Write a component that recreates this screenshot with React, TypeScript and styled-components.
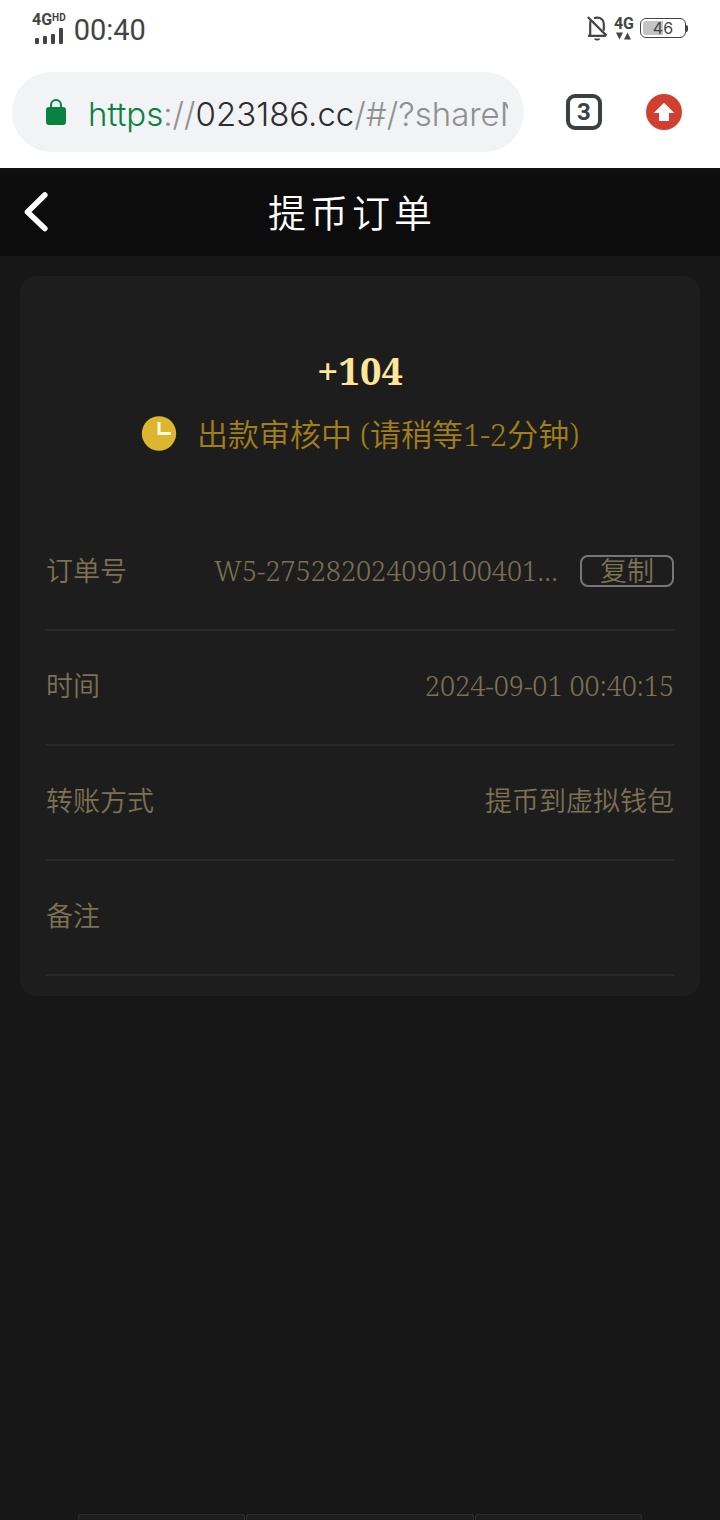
import React from "react";
import styled, { createGlobalStyle } from "styled-components";

const GlobalStyle = createGlobalStyle`
  *, *::before, *::after { box-sizing: border-box; }
  html { background: #171717; }
  body { margin: 0; }
  button { font: inherit; color: inherit; background: none; border: 0; padding: 0; cursor: pointer; }
  svg { display: block; flex: none; }
`;

const uiFont = `Inter, Roboto, "Noto Sans CJK SC", sans-serif`;
const systemFont = `Roboto, "Noto Sans CJK SC", sans-serif`;
const pageFont = `"Noto Serif", "DejaVu Serif Condensed", "Noto Sans CJK SC", serif`;

const Screen = styled.div`
  display: flex;
  flex-direction: column;
  min-height: 100vh;
  background: #171717;
  font-family: ${pageFont};
  font-weight: 350;
`;

const StatusBar = styled.div`
  display: flex;
  align-items: center;
  justify-content: space-between;
  height: 56px;
  padding: 0 32px;
  background: #fff;
  color: #444;
  font-family: ${systemFont};
`;

const StatusGroup = styled.div<{ $gap: number }>`
  display: flex;
  align-items: center;
  gap: ${({ $gap }) => $gap}px;
`;

const Clock = styled.time`
  font-size: 29px;
  font-weight: 400;
  line-height: 32px;
  padding-top: 4px;
`;

const NetworkStack = styled.div`
  display: flex;
  flex-direction: column;
  gap: 1px;
`;

const NetworkLabel = styled.span`
  display: flex;
  align-items: flex-start;
  font-size: 16px;
  font-weight: 700;
  line-height: 14px;
`;

const NetworkMark = styled.span`
  font-size: 10px;
  line-height: 10px;
`;

const BatteryShell = styled.div`
  display: flex;
  align-items: center;
`;

const BatteryBody = styled.div`
  display: flex;
  align-items: center;
  justify-content: center;
  width: 46px;
  height: 20px;
  border: 1px solid #444;
  border-radius: 6px;
  background: linear-gradient(to right, #c4c4c4 50%, #fff 50%) content-box;
  padding: 2px;
  font-family: ${uiFont};
  font-size: 16px;
  font-weight: 400;
  line-height: 16px;
`;

const BatteryTip = styled.div`
  width: 2px;
  height: 7px;
  background: #444;
  border-radius: 0 2px 2px 0;
`;

const BrowserBar = styled.div`
  display: flex;
  align-items: center;
  padding: 16px 38px 16px 12px;
  background: #fff;
  font-family: ${uiFont};
`;

const AddressBox = styled.button`
  display: flex;
  align-items: center;
  flex: 1;
  min-width: 0;
  height: 80px;
  padding: 0 16px 0 32px;
  border-radius: 40px;
  background: #f1f3f4;
  text-align: left;
`;

const AddressText = styled.span`
  flex: 1;
  min-width: 0;
  margin-left: 20px;
  overflow: hidden;
  white-space: nowrap;
  font-size: 33px;
  font-weight: 300;
  line-height: 44px;
  padding-top: 4px;
  color: #8e9092;
`;

const Secure = styled.span`
  color: #0b8043;
`;

const Host = styled.span`
  color: #2b2d30;
`;

const TabCount = styled.button`
  width: 36px;
  height: 36px;
  margin-left: 42px;
  border: 4px solid #3c4043;
  border-radius: 9px;
  color: #3c4043;
  font-family: ${systemFont};
  font-size: 24px;
  font-weight: 700;
  line-height: 28px;
`;

const UpdateButton = styled.button`
  margin-left: 44px;
`;

const Header = styled.header`
  display: grid;
  grid-template-columns: 72px 1fr 72px;
  align-items: center;
  height: 88px;
  background: linear-gradient(#111 0, #0c0c0c 12px);
  color: #fff;
`;

const BackButton = styled.button`
  padding-left: 22px;
`;

const Title = styled.h1`
  margin: 0 16px 0 0;
  text-align: center;
  font-size: 38px;
  font-weight: 350;
  line-height: 48px;
  letter-spacing: 4px;
`;

const Card = styled.main`
  margin: 20px 20px 40px;
  padding: 68px 26px 20px;
  border-radius: 16px;
  background: #1d1d1d;
`;

const Amount = styled.p`
  margin: 0;
  text-align: center;
  color: #ffe69b;
  font-size: 38px;
  font-weight: 700;
  line-height: 52px;
`;

const Status = styled.p`
  display: flex;
  align-items: center;
  justify-content: center;
  gap: 20px;
  margin: 14px 0 58px;
  color: #a37f17;
  font-size: 31px;
  line-height: 48px;
  white-space: nowrap;
`;

const Details = styled.dl`
  margin: 0;
`;

const Row = styled.div`
  display: flex;
  align-items: center;
  justify-content: space-between;
  height: 115px;
  padding-bottom: 4px;
  border-bottom: 2px solid #282828;
  color: #7d7153;
  font-size: 27px;
  line-height: 36px;
`;

const Label = styled.dt`
  flex: none;
`;

const Value = styled.dd`
  display: flex;
  align-items: center;
  justify-content: flex-end;
  gap: 22px;
  min-width: 0;
  margin: 0;
`;

const OrderNumber = styled.span`
  overflow: hidden;
  text-overflow: ellipsis;
  white-space: nowrap;
`;

const CopyButton = styled.button`
  flex: none;
  width: 94px;
  height: 32px;
  border: 2px solid #777;
  border-radius: 8px;
  line-height: 28px;
`;

const BottomTabs = styled.nav`
  display: flex;
  gap: 1px;
  height: 6px;
  margin: auto 78px 0;
`;

const BottomTab = styled.div<{ $grow: number }>`
  flex: ${({ $grow }) => $grow} 1 0;
  border: 1px solid #2b2b2b;
  border-bottom: 0;
  border-radius: 3px 3px 0 0;
  background: #1d1d1d;
`;

const SignalBars = () => (
  <svg width="32" height="16" viewBox="0 0 32 16" fill="#444">
    <rect x="3" y="10" width="4" height="6" rx="1" />
    <rect x="11" y="8" width="4" height="8" rx="1" />
    <rect x="19" y="6" width="4" height="10" rx="1" />
    <rect x="27" y="0" width="4" height="16" rx="1" />
  </svg>
);

const MutedBell = () => (
  <svg width="22" height="26" viewBox="0 0 22 26" fill="none" stroke="#444" strokeWidth="2.2">
    <path d="M4.200 20.500V9c0-1.500.2-2.600.8-3.600M8 3.200C9 2.800 10 2.600 11.200 2.600c4.200 0 6.600 2.800 6.600 6.600v6.500" />
    <path d="M2 20.800h17.800M1.800 2l18.700 18.600" />
    <path d="M8 23.400h6.400c-.6 1.400-1.800 2-3.200 2S8.600 24.800 8 23.400Z" fill="#444" stroke="none" />
  </svg>
);

const DataArrows = () => (
  <svg width="18" height="8" viewBox="0 0 18 8" fill="#444">
    <path d="M2 0.500h7L5.500 7.500ZM10 7.500h7L13.500 0.500Z" />
  </svg>
);

const Lock = () => (
  <svg width="24" height="28" viewBox="0 0 24 28">
    <rect x="2" y="9" width="20" height="18" rx="3" fill="#0b8043" />
    <path d="M7 10V7a5 5 0 0 1 10 0v3" fill="none" stroke="#0b8043" strokeWidth="2" />
  </svg>
);

const UpdateArrow = () => (
  <svg width="36" height="36" viewBox="0 0 36 36">
    <circle cx="18" cy="18" r="18" fill="#d23f31" />
    <path d="M18 8.800 28.300 19H23v8H13v-8H7.700Z" fill="#fff" />
  </svg>
);

const BackArrow = () => (
  <svg width="28" height="42" viewBox="0 0 28 42" fill="none">
    <path d="M22.800 4 5.500 21l17.300 16.500" stroke="#fff" strokeWidth="5.600" strokeLinecap="round" strokeLinejoin="round" />
  </svg>
);

const PendingClock = () => (
  <svg width="36" height="36" viewBox="0 0 36 36">
    <circle cx="18" cy="17.500" r="17.200" fill="#deb52e" />
    <path d="M18 6v11.500h12" fill="none" stroke="#fffbe8" strokeWidth="3" />
  </svg>
);

export default function App() {
  return (
    <>
      <GlobalStyle />
      <Screen>
        <StatusBar>
          <StatusGroup $gap={8}>
            <NetworkStack>
              <NetworkLabel>
                4G<NetworkMark>HD</NetworkMark>
              </NetworkLabel>
              <SignalBars />
            </NetworkStack>
            <Clock>00:40</Clock>
          </StatusGroup>
          <StatusGroup $gap={6}>
            <MutedBell />
            <NetworkStack>
              <NetworkLabel>4G</NetworkLabel>
              <DataArrows />
            </NetworkStack>
            <BatteryShell>
              <BatteryBody>46</BatteryBody>
              <BatteryTip />
            </BatteryShell>
          </StatusGroup>
        </StatusBar>

        <BrowserBar>
          <AddressBox type="button">
            <Lock />
            <AddressText>
              <Secure>https</Secure>://<Host>023186.cc</Host>/#/?shareN
            </AddressText>
          </AddressBox>
          <TabCount type="button">3</TabCount>
          <UpdateButton type="button" aria-label="Update">
            <UpdateArrow />
          </UpdateButton>
        </BrowserBar>

        <Header>
          <BackButton type="button" aria-label="返回">
            <BackArrow />
          </BackButton>
          <Title>提币订单</Title>
        </Header>

        <Card>
          <Amount>+104</Amount>
          <Status>
            <PendingClock />
            出款审核中 (请稍等1-2分钟)
          </Status>
          <Details>
            <Row>
              <Label>订单号</Label>
              <Value>
                <OrderNumber>W5-275282024090100401…</OrderNumber>
                <CopyButton type="button">复制</CopyButton>
              </Value>
            </Row>
            <Row>
              <Label>时间</Label>
              <Value>2024-09-01 00:40:15</Value>
            </Row>
            <Row>
              <Label>转账方式</Label>
              <Value>提币到虚拟钱包</Value>
            </Row>
            <Row>
              <Label>备注</Label>
              <Value />
            </Row>
          </Details>
        </Card>

        <BottomTabs>
          <BottomTab $grow={167} />
          <BottomTab $grow={228} />
          <BottomTab $grow={167} />
        </BottomTabs>
      </Screen>
    </>
  );
}
